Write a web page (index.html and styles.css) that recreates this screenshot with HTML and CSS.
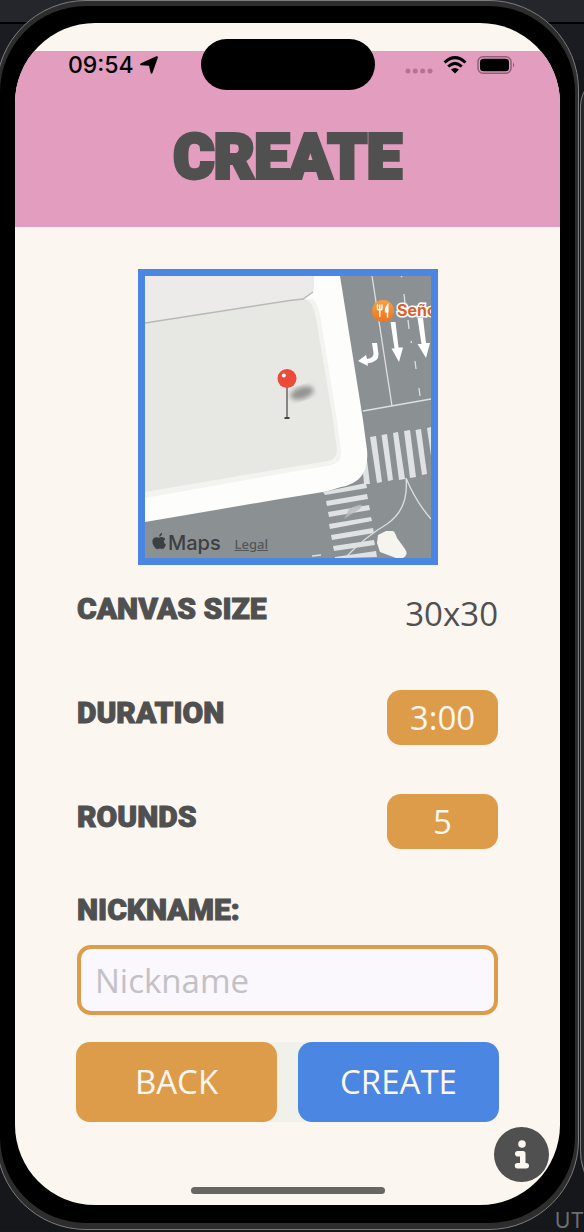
FILE: index.html
```html
<!DOCTYPE html>
<html lang="en">
<head>
<meta charset="utf-8">
<meta name="viewport" content="width=device-width, initial-scale=1">
<title>Create</title>
<link rel="stylesheet" href="styles.css">
</head>
<body>
<div class="desktop">
  <div class="neighbour"></div>
  <span class="backdrop-text">UT</span>
  <div class="device">
    <div class="bezel">
      <div class="screen">
        <div class="status">
          <div class="status-time">
            <span>09:54</span>
            <svg width="18" height="18" viewBox="0 0 18 18"><path d="M1 7.300L16.300.2Q18.300-.2 17.800 1.800L12.500 16.800Q11.700 18.500 10.700 17L9 9.800L1 9.200Q-.8 8.500 1 7.300Z"/></svg>
          </div>
          <div class="island"></div>
          <div class="status-icons">
            <svg width="28" height="18" viewBox="0 0 28 18" fill="#b57293"><circle cx="3" cy="15" r="2.500"/><circle cx="10.300" cy="15" r="2.500"/><circle cx="17.600" cy="15" r="2.500"/><circle cx="25" cy="15" r="2.500"/></svg>
            <svg width="24" height="18" viewBox="0 0 24 18"><g fill="none" stroke="#000" stroke-width="3"><path d="M1.500 6.500Q12-3.200 22.500 6.500"/><path d="M5.200 10.500Q12 4.300 18.800 10.500"/></g><path d="M8 13.500Q12 10.500 16 13.500L12 17.500Z"/></svg>
            <svg width="38" height="18" viewBox="0 0 38 18"><rect x="1" y=".8" width="33" height="16.400" rx="5" fill="none" stroke="#925e7b" stroke-width="1.500"/><rect x="3" y="2.800" width="29" height="12.500" rx="3.500"/><path d="M36 6.500Q38.500 9 36 11.500Z" fill="#925e7b"/></svg>
          </div>
        </div>
        <header class="header"><h1 class="title">CREATE</h1></header>
        <main class="content">
          <div class="map">
            <svg class="map-art" viewBox="0 0 286 282" preserveAspectRatio="xMidYMid slice" role="img" aria-label="Map with pin">
              <defs>
                <filter id="soft"><feGaussianBlur stdDeviation="2.500"/></filter>
                <linearGradient id="poi" x1="0" y1="0" x2="0" y2="1"><stop offset="0" stop-color="#f9a040"/><stop offset="1" stop-color="#ee7322"/></linearGradient>
              </defs>
              <rect width="286" height="282" fill="#8b9193"/>
              <path fill="#dfe1e2" d="M178 216L221 207L222 212L180 219ZM181 225L222 218L223 223L182 230ZM183 236L224 229L225 234L184 241ZM184 248L226 241L227 245L185 253ZM186 259L228 252L229 257L187 264ZM188 270L229 264L230 269L189 275ZM190 281L231 275L232 281L200 282H190ZM217 185L222 184L225 208L219 208ZM225 161L231 160L237 206L232 207ZM236.500 159L242 158L248 204L243 205ZM248 157L253 156L260 203L254 204ZM259 155L265 154L271 201L265 202ZM270.500 154L276 153L282 198L277 199ZM282 152L286 151V180Z"/>
              <path d="M0 0H195L218 144L222 174Q225 206 196 211Q184 215 178 216L135 223L0 246Z" fill="#fdfdfc"/>
              <path d="M168 23Q172 26 175 39L191 137L196 175Q197 187 187 189L135 198L0 222V47Z" fill="#f4f3f0"/>
              <path d="M0 47L158 23Q167 22 171 42L187 137L192 174Q192 183 183 185L135 193L0 216Z" fill="#e7e8e4"/>
              <path d="M0 0H169V13L168 16L158 23L0 47Z" fill="#ecebe9"/>
              <path d="M0 47L145 24.500L158 23L168 16" fill="none" stroke="#b8b8b5" stroke-width="1.500"/>
              <g fill="none" stroke="#dedfe0" stroke-width="1.300"><path d="M227 0L247 130M218 135L286 123M259 18L260 27M263 44L264 53M266 65L266.500 67M270 85L271 93M274 112L275 120M256 0L257 1M167 280L176 279"/><path d="M261 202Q264 233 242 248Q220 261 200 282M261 202Q271 226 286 243"/></g>
              <path d="M199 243L204 233Q213 228 217 229L215 233Z" fill="#b8bbbc" opacity=".8"/>
              <path d="M233 259L241 255H248Q250 256 252 262L260 273Q264 279 258 282H251L235 276L232 267Z" fill="#f5f4ef"/>
              <path fill="#fff" d="M245.500 46H250.500L253.500 71.500H258L254 86L246.500 72.500H249.500ZM272.500 42H278L281 67H285L281 82L272.500 68H276.500ZM227 67H232L233.500 78Q234 86 222.500 87.500L223 90L213 85L221 79L222 83Q229 82 228.500 77Z"/>
              <circle cx="238" cy="35" r="11" fill="url(#poi)"/>
              <g fill="none" stroke="#fff" stroke-width="1.400" stroke-linecap="round"><path d="M232.500 29V33Q234.800 35.500 237 33V29M234.800 29V40.500M242.500 41V36"/><path d="M242.800 29Q239.500 33 241 36H242.800Z" fill="#fff"/></g>
              <text class="poi-label" x="252" y="40">Seño</text>
              <ellipse cx="157" cy="117" rx="12" ry="6" fill="#777" opacity=".75" transform="rotate(-18 157 117)" filter="url(#soft)"/>
              <path d="M142 110V141" stroke="#858585" stroke-width="2"/>
              <path d="M139.500 142H144.500" stroke="#444" stroke-width="2"/>
              <circle cx="142" cy="102.500" r="9.500" fill="#eb4b38"/>
              <circle cx="138.800" cy="99.500" r="2" fill="#fff"/>
              <path transform="translate(7 257)" fill="#3c4042" d="M7.200 3.800Q7 .8 10-.2Q10.300 3 7.200 3.800ZM7 4.800Q9.500 3.600 11.500 4.500Q12.500 4.800 13.300 6Q10 8.800 14 11.500Q12.500 16 10 16Q8 15 6 16Q4 16.800 1.500 12.500Q-1.300 6.500 2.800 4.500Q5 3.900 7 4.800Z"/>
              <text class="map-brand" x="23" y="274">Maps</text>
            </svg>
            <a class="map-legal" href="#legal">Legal</a>
          </div>
          <form class="form">
            <div class="row"><span class="label">CANVAS SIZE</span><output class="value">30x30</output></div>
            <div class="row"><label class="label" for="duration">DURATION</label><button class="pill" type="button" id="duration">3:00</button></div>
            <div class="row"><label class="label" for="rounds">ROUNDS</label><button class="pill" type="button" id="rounds">5</button></div>
            <div class="field">
              <label class="label" for="nickname">NICKNAME:</label>
              <input class="input" id="nickname" type="text" placeholder="Nickname">
            </div>
            <div class="actions">
              <button class="action back" type="button">BACK</button>
              <button class="action create" type="submit">CREATE</button>
            </div>
          </form>
        </main>
        <button class="info" type="button" aria-label="Information">
          <svg width="16" height="30" viewBox="0 0 16 30" fill="#fbf6ef"><circle cx="8" cy="4" r="3.800"/><path d="M4 11H9Q11.500 11 11.500 13.500V23H12Q15 23 15 25.800T12 28.500H3.500Q.8 28.500.8 25.800T3.500 23H6V16.500H4Q1 16.500 1 13.700T4 11Z"/></svg>
        </button>
        <div class="home"></div>
      </div>
    </div>
  </div>
</div>
</body>
</html>
```
FILE: styles.css
```css
* { box-sizing: border-box; }
body { margin: 0; background: #17191e; }
.desktop {
  position: relative;
  overflow: hidden;
  padding: 0 5px 1px 0;
  background: linear-gradient(#24262b 0 22px, #000 22px 24px, #1a1c21 24px 60px, #15171b 60px);
}
.neighbour {
  position: absolute;
  top: 76px;
  bottom: 20px;
  left: calc(100% - 4px);
  width: 60px;
  border: 1px solid #777;
  border-radius: 40px 0 0 80px;
  background: #26272a;
}
.backdrop-text {
  position: absolute;
  z-index: 1;
  right: 0;
  bottom: -2px;
  font: 21px/24px Inter, sans-serif;
  color: #6c6e70;
}
.device {
  position: relative;
  margin-left: -4px;
  padding: 5px 3px 6px;
  border: 1px solid #7d7d7d;
  border-radius: 90px;
  background: #2d2d2d;
}
.bezel {
  padding: 17px 15px 18px;
  border-radius: 86px;
  background: #000;
}
.screen {
  position: relative;
  display: flex;
  flex-direction: column;
  overflow: hidden;
  padding-top: 28px;
  border-radius: 80px;
  background: #fbf6ef;
}
.status {
  position: absolute;
  top: 16px;
  left: 0;
  right: 0;
  display: grid;
  grid-template-columns: 1fr auto 1fr;
  align-items: center;
}
.status-time {
  display: flex;
  align-items: center;
  gap: 6px;
  padding-left: 53px;
  font: 500 23px/28px Inter, sans-serif;
  color: #000;
}
.status-icons {
  display: flex;
  justify-content: flex-end;
  gap: 10px;
  padding-right: 45px;
}
.island {
  width: 174px;
  height: 51px;
  border-radius: 26px;
  background: #000;
}
.header {
  padding: 70px 16px 34px;
  background: #e39dbf;
  text-align: center;
}
.title {
  margin: 0;
  font: 900 62px/72px Roboto, sans-serif;
  color: #505050;
  -webkit-text-stroke: 4px #505050;
}
.content {
  display: flex;
  flex-direction: column;
  padding: 42px 62px 83px;
}
.map {
  position: relative;
  align-self: center;
  width: 300px;
  height: 296px;
  border: 7px solid #4b86e2;
}
.map-art { display: block; width: 100%; height: 100%; }
.poi-label {
  font: 700 16px Inter, sans-serif;
  fill: #d9632b;
  stroke: #fff;
  stroke-width: 3px;
  paint-order: stroke;
}
.map-brand { font: 500 20px Inter, sans-serif; fill: #3c4042; }
.map-legal {
  position: absolute;
  left: 90px;
  bottom: 6px;
  font: 500 13px/16px "Noto Sans", sans-serif;
  color: #515659;
}
.form { display: flex; flex-direction: column; gap: 49px; padding-top: 21px; }
.row { display: flex; justify-content: space-between; height: 55px; }
.label {
  font: 900 30px/46px Roboto, sans-serif;
  color: #505050;
  -webkit-text-stroke: 1px #505050;
}
.value { font: 33px/55px "Open Sans", sans-serif; color: #505050; }
.pill, .action {
  padding: 0;
  border: 0;
  border-radius: 14px;
  background: #dd9c4a;
  color: #fbf6ef;
  font: 33px/54px "Open Sans", sans-serif;
}
.pill { width: 111px; }
.field { display: flex; flex-direction: column; gap: 12px; margin-top: -11px; }
.input {
  width: 100%;
  height: 70px;
  padding: 0 14px;
  border: 4px solid #dd9c4a;
  border-radius: 14px;
  background: #faf7fd;
  color: #505050;
  font: 33px/46px "Open Sans", sans-serif;
}
.input::placeholder { color: #c4c1c6; opacity: 1; }
.actions {
  display: grid;
  grid-template-columns: 1fr 1fr;
  gap: 21px;
  margin: -22px -1px 0;
  border-radius: 14px;
  background: #f0f1eb;
}
.action { height: 80px; }
.create { background: #4b86e2; }
.info {
  position: absolute;
  right: 11px;
  bottom: 23px;
  display: grid;
  place-items: center;
  width: 55px;
  height: 55px;
  padding: 0;
  border: 0;
  border-radius: 50%;
  background: #505050;
}
.home {
  position: absolute;
  bottom: 11px;
  left: 50%;
  width: 194px;
  height: 7px;
  margin-left: -97px;
  border-radius: 4px;
  background: #696764;
}
```
